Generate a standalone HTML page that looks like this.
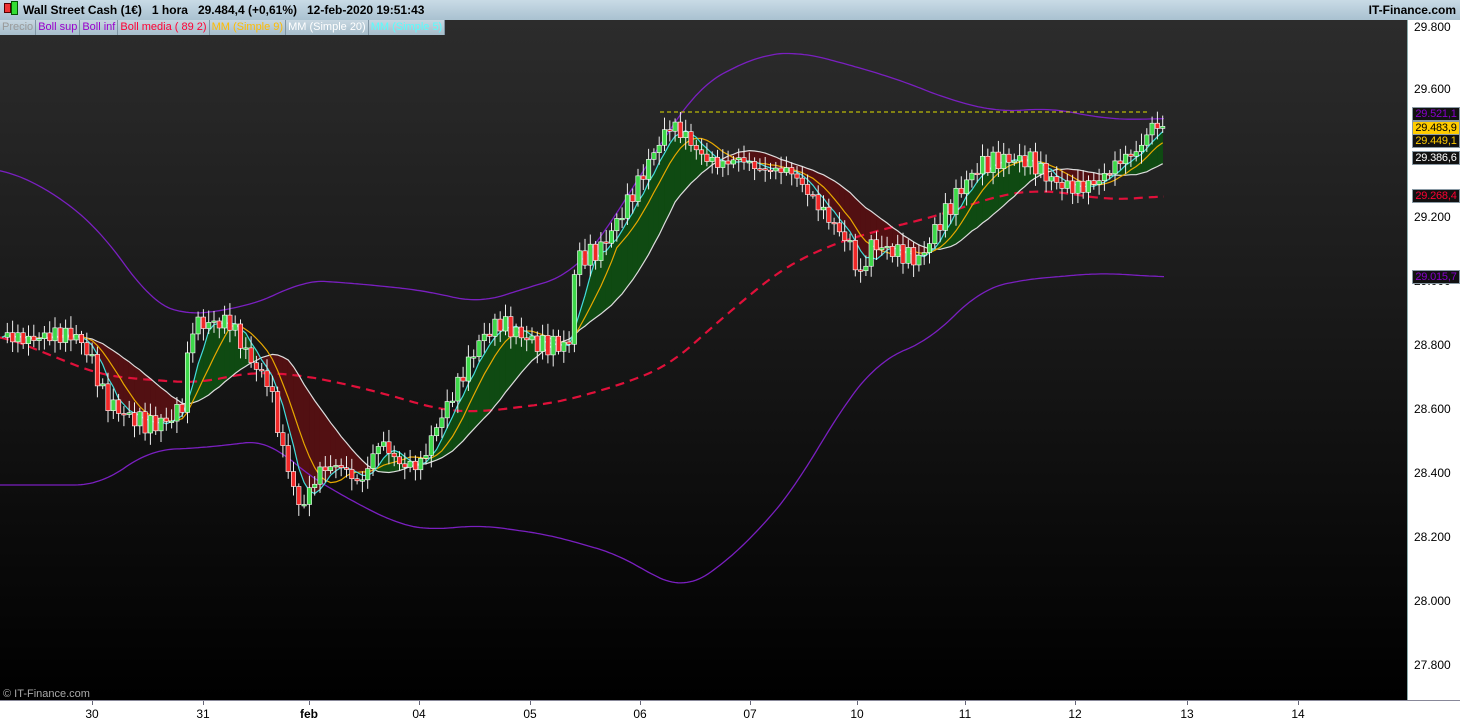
<!DOCTYPE html>
<html><head><meta charset="utf-8"><style>
body{margin:0;width:1460px;height:720px;overflow:hidden;font-family:"Liberation Sans",sans-serif;background:#fff}
#hdr{position:absolute;left:0;top:0;width:1460px;height:20px;background:linear-gradient(#c9dbe6,#a9c1d0);font-size:12px;font-weight:bold;color:#000}
#leg{position:absolute;left:0;top:20px;height:15px;display:flex;font-size:11px}
#leg span{background:linear-gradient(#c7d7e1,#a6bdcb);border-right:1px solid #7f95a4;padding:0 2px;line-height:15px}
#chart{position:absolute;left:0;top:20px}
#ax{position:absolute;left:1407px;top:20px;width:53px;height:680px;background:#fff;border-left:1px solid #8aa;font-size:12px}
.pl{position:absolute;left:6px}
.bx{position:absolute;left:4px;width:46px;height:12px;border:1px solid #8a9aa5;font-size:11px;line-height:12px;background:#111;text-align:center;overflow:hidden;letter-spacing:-0.2px}
#bt{position:absolute;left:0;top:700px;width:1460px;height:20px;background:#fff;border-top:1px solid #889;font-size:12px}
.dl{position:absolute;top:6px;transform:translateX(-50%)}
.tk{position:absolute;top:0;width:1px;height:4px;background:#667}
</style></head><body>
<div id="hdr"><span style="position:absolute;left:4px;top:3px;width:5px;height:8px;background:#e33;border:1px solid #500"></span><span style="position:absolute;left:11px;top:1px;width:5px;height:12px;background:#3d3;border:1px solid #050"></span>
<span style="position:absolute;left:23px;top:3px">Wall Street Cash (1€) &nbsp;&nbsp;1 hora &nbsp;&nbsp;29.484,4 (+0,61%) &nbsp;&nbsp;12-feb-2020 19:51:43</span>
<span style="position:absolute;right:4px;top:3px">IT-Finance.com</span></div>
<svg id="chart" width="1407" height="680"></svg>
<div id="leg"><span style="color:#999">Precio</span><span style="color:#90c">Boll sup</span><span style="color:#90c">Boll inf</span><span style="color:#f03">Boll media ( 89 2)</span><span style="color:#fb0">MM (Simple 9)</span><span style="color:#fff">MM (Simple 20)</span><span style="color:#5ff">MM (Simple 5)</span></div>
<div style="position:absolute;left:3px;top:688px;font-size:11px;color:#aaa">© IT-Finance.com</div>
<div id="ax">
<div class="pl" style="top:0px">29.800</div><div class="pl" style="top:62px">29.600</div><div class="pl" style="top:190px">29.200</div><div class="pl" style="top:318px">28.800</div><div class="pl" style="top:382px">28.600</div><div class="pl" style="top:446px">28.400</div><div class="pl" style="top:510px">28.200</div><div class="pl" style="top:574px">28.000</div><div class="pl" style="top:638px">27.800</div><div class="pl" style="top:254px">29.000</div>
<div class="bx" style="top:87px;color:#80c">29.521,1</div>
<div class="bx" style="top:101px;background:#fc0;color:#000">29.483,9</div>
<div class="bx" style="top:114px;color:#fc0">29.449,1</div>
<div class="bx" style="top:131px;color:#fff">29.386,6</div>
<div class="bx" style="top:169px;color:#f03">29.268,4</div>
<div class="bx" style="top:250px;color:#80c">29.015,7</div>
</div>
<div id="bt"></div>
<script>
const svg=document.getElementById('chart');let h='';
h+='<defs><linearGradient id="bg" x1="0" y1="0" x2="0" y2="1"><stop offset="0" stop-color="#2c2c2c"/><stop offset="1" stop-color="#000"/></linearGradient></defs><rect width="1407" height="680" fill="url(#bg)"/>';
function interp(pts,x){for(let i=1;i<pts.length;i++){if(x<=pts[i][0]){const a=pts[i-1],b=pts[i];return a[1]+(b[1]-a[1])*(x-a[0])/(b[0]-a[0]);}}return pts[pts.length-1][1];}
const P=[[0,335],[30,340],[50,335],[75,335],[90,355],[105,400],[125,415],[150,425],[170,420],[185,400],[190,325],[230,322],[250,360],[270,385],[280,440],[300,510],[320,470],[340,465],[360,485],[380,440],[400,465],[420,465],[435,430],[460,380],[480,340],[500,322],[520,335],[540,345],[570,345],[575,260],[600,250],[615,225],[640,180],[655,150],[670,125],[685,135],[700,155],[720,165],[740,158],[760,170],[790,170],[810,195],[830,220],[850,245],[860,280],[870,245],[890,250],[920,260],[935,230],[960,190],[980,165],[1000,160],[1030,160],[1045,175],[1060,185],[1080,188],[1100,180],[1120,160],[1140,150],[1150,125],[1165,128]];
function sm(pts){const o=[];for(let x=pts[0][0];x<=pts[pts.length-1][0];x+=3){let s=0,c=0;for(let d=-24;d<=24;d+=3){s+=interp(pts,Math.max(pts[0][0],Math.min(pts[pts.length-1][0],x+d)));c++;}o.push([x,s/c]);}return o;}
function line(pts,c,w,d){let s='M';pts.forEach((p,i)=>s+=(i?'L':'')+p[0]+','+(p[1]-20).toFixed(1));return '<path d="'+s+'" fill="none" stroke="'+c+'" stroke-width="'+w+'"'+(d?' stroke-dasharray="'+d+'"':'')+'/>';}
const step=5.3;const xs=[],ps=[];for(let x=2;x<=1166;x+=step){xs.push(x);ps.push(interp(P,x)+Math.sin(x*1.7)*6+Math.sin(x*0.53)*4);}
function sma(n){return ps.map((v,i)=>{let s=0,c=0;for(let j=Math.max(0,i-n+1);j<=i;j++){s+=ps[j];c++;}return s/c;});}
const m5=sma(5),m9=sma(9),m20=sma(20);
for(let i=1;i<xs.length;i++){const up=m5[i]<m20[i];h+='<polygon points="'+xs[i-1]+','+(m5[i-1]-20)+' '+xs[i]+','+(m5[i]-20)+' '+xs[i]+','+(m20[i]-20)+' '+xs[i-1]+','+(m20[i-1]-20)+'" fill="'+(up?'#0f4a12':'#521012')+'" stroke="'+(up?'#0f4a12':'#521012')+'" stroke-width="0.6"/>';}
const bu=[[0,168],[50,190],[100,230],[150,300],[180,315],[230,310],[280,295],[300,280],[350,283],[420,290],[480,303],[520,290],[570,275],[600,240],[650,160],[700,85],[760,55],[800,52],[850,65],[900,80],[950,100],[1000,112],[1050,108],[1100,118],[1140,120],[1165,118]];
const bl=[[0,485],[100,485],[150,450],[200,448],[270,440],[300,470],[350,500],[400,525],[430,530],[480,525],[550,535],[620,555],[660,580],[685,588],[710,575],[760,530],[800,480],[840,410],[880,360],[930,340],[980,290],[1020,280],[1100,273],[1165,277]];
const bm=[[0,335],[100,375],[150,380],[200,383],[250,372],[300,375],[350,385],[400,398],[440,410],[480,412],[560,402],[620,385],[670,365],[720,320],[780,270],[830,245],[880,230],[940,215],[1000,195],[1040,190],[1080,195],[1110,200],[1140,198],[1165,196]];
h+=line(sm(bu),'#7a1fc0',1.3)+line(sm(bl),'#7a1fc0',1.3)+line(sm(bm),'#e0103a',2.2,'9,6');
h+='<line x1="660" y1="92" x2="1150" y2="92" stroke="#dd0" stroke-dasharray="4,3"/>';
h+=line(xs.map((x,i)=>[x,m20[i]]),'#ddd',1.2)+line(xs.map((x,i)=>[x,m9[i]]),'#e8a800',1.2)+line(xs.map((x,i)=>[x,m5[i]]),'#4dd',1.2);
for(let i=1;i<xs.length;i++){const o=ps[i-1],c=ps[i];const x=xs[i];const t=Math.min(o,c)-20,b=Math.max(o,c)-20;const wl=t-3-Math.abs(Math.sin(i*2.3))*9,wh=b+3+Math.abs(Math.cos(i*1.9))*9;
h+='<line x1="'+x+'" y1="'+wl+'" x2="'+x+'" y2="'+wh+'" stroke="#eee" stroke-width="1"/>';
h+='<rect x="'+(x-2.2)+'" y="'+t+'" width="4.4" height="'+Math.max(b-t,1.5)+'" fill="'+(c<o?'#3ed84a':'#f02828')+'" stroke="#fff" stroke-width="0.6"/>';}
svg.innerHTML=h;
const bt=document.getElementById('bt');let d='';
[['30',92],['31',203],['feb',309],['04',419],['05',530],['06',640],['07',750],['10',857],['11',965],['12',1075],['13',1187],['14',1298]].forEach(a=>{d+='<div class="tk" style="left:'+a[1]+'px"></div><div class="dl" style="left:'+a[1]+'px;'+(a[0]=='feb'?'font-weight:bold':'')+'">'+a[0]+'</div>';});
bt.innerHTML=d;
</script>
</body></html>
